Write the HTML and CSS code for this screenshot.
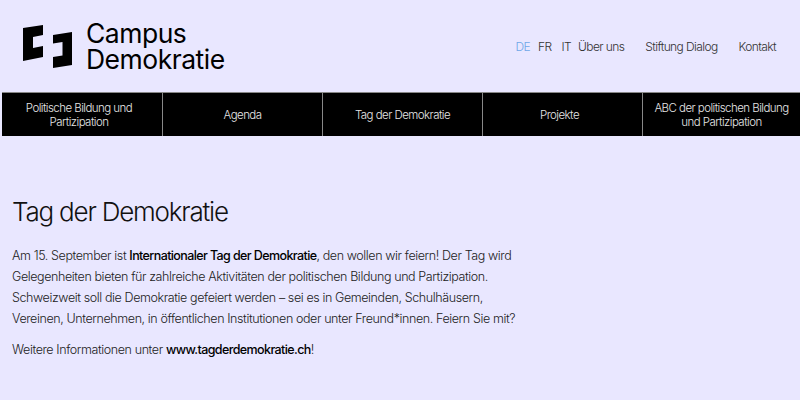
FILE: index.html
```html
<!DOCTYPE html>
<html lang="de">

<head>
    <meta charset="UTF-8">
    <meta name="viewport" content="width=device-width, initial-scale=1.0">
    <title>Tag der Demokratie</title>
    <link rel="stylesheet" href="styles.css">
</head>

<body>

    <header class="header">
        <a class="logo" href="#">
            <svg class="logo__mark" width="50" height="45" viewBox="0 0 50 45">
                <path d="M0 4 L20 1 V11 L10 13 V24 L20 22 V33 L0 37 Z" fill="#000"/>
                <path d="M30 11 L49 8 V41 L30 44 V33 L39.500 31.500 V18 L30 19.500 Z" fill="#000"/>
            </svg>
            <span class="logo__text">Campus<br>Demokratie</span>
        </a>
        <nav class="meta">
            <a class="meta__lang meta__lang--active" href="#">DE</a>
            <a class="meta__lang" href="#">FR</a>
            <a class="meta__lang" href="#">IT</a>
            <a class="meta__link" href="#">Über uns</a>
            <a class="meta__link" href="#">Stiftung Dialog</a>
            <a class="meta__link" href="#">Kontakt</a>
        </nav>
    </header>

    <nav class="mainnav">
        <a class="mainnav__item mainnav__item--first" href="#">Politische Bildung und<br>Partizipation</a>
        <a class="mainnav__item" href="#">Agenda</a>
        <a class="mainnav__item" href="#">Tag der Demokratie</a>
        <a class="mainnav__item mainnav__item--left" href="#">Projekte</a>
        <a class="mainnav__item" href="#">ABC der politischen Bildung<br>und Partizipation</a>
    </nav>

    <main class="content">
        <h1 class="content__title">Tag der Demokratie</h1>
        <p class="content__text">Am 15. September ist <strong>Internationaler Tag der Demokratie</strong>, den wollen wir feiern! Der Tag wird<br>Gelegenheiten bieten für zahlreiche Aktivitäten der politischen Bildung und Partizipation.<br>Schweizweit soll die Demokratie gefeiert werden – sei es in Gemeinden, Schulhäusern,<br>Vereinen, Unternehmen, in öffentlichen Institutionen oder unter Freund*innen. Feiern Sie mit?</p>
        <p class="content__text">Weitere Informationen unter <strong>www.tagderdemokratie.ch</strong>!</p>
    </main>

</body>

</html>
```

FILE: styles.css
```css
html {
    box-sizing: border-box;
    background: #e9e7ff;
}

*,
*:before,
*:after {
    box-sizing: inherit;
}

body {
    margin: 0;
    height: 400px;
    overflow: hidden;
    font-family: 'Inter', 'Liberation Sans', sans-serif;
    font-weight: 300;
    color: #222;
}

a {
    color: inherit;
    text-decoration: none;
}

.header {
    display: flex;
    align-items: center;
    justify-content: space-between;
    height: 92px;
    padding: 0 24px 0 23px;
}

.logo {
    display: flex;
    align-items: center;
    gap: 13px;
    color: #000;
}

.logo__mark {
    display: block;
}

.logo__text {
    font-size: 26.5px;
    line-height: 26px;
    font-weight: 400;
    letter-spacing: -0.5px;
}

.meta {
    display: flex;
    align-items: center;
    font-size: 12px;
    letter-spacing: -0.6px;
    color: #333;
}

.meta__lang {
    margin-right: 10px;
}

.meta__lang--active {
    margin-right: 8px;
    color: #6fa8e8;
}

.meta__link {
    margin-left: 21px;
}

.meta__lang + .meta__link {
    margin-left: -3px;
}

.mainnav {
    display: flex;
    margin-left: 2px;
    height: 44px;
    background: #000;
    border-top: 1px solid #888;
}

.mainnav__item {
    display: flex;
    align-items: center;
    justify-content: center;
    flex: 0 0 160px;
    padding: 0 4px;
    text-align: center;
    font-size: 11.5px;
    line-height: 14px;
    letter-spacing: -0.55px;
    color: #e6e6e6;
    border-right: 1px solid #888;
}

.mainnav__item--first {
    flex-basis: 161px;
    padding-right: 10px;
}

.mainnav__item--left {
    padding-right: 10px;
}

.mainnav__item:last-child {
    border-right: 0;
    flex: 1;
}

.content {
    padding: 60px 12px 0;
}

.content__title {
    margin: 0 0 17px;
    font-size: 26px;
    line-height: 32px;
    font-weight: 350;
    letter-spacing: -1.2px;
    color: #111;
}

.content__text {
    margin: 0 0 10px;
    font-size: 12.5px;
    line-height: 21px;
    letter-spacing: -0.4px;
}

.content__text strong {
    font-weight: 500;
    letter-spacing: -0.6px;
    color: #000;
}
```
